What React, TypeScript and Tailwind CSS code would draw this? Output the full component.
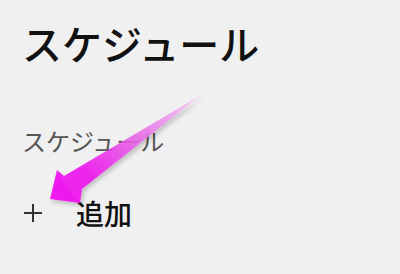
const Arrow = () => (
  <svg
    className="absolute left-0 top-0 pointer-events-none"
    width="400"
    height="274"
    viewBox="0 0 400 274"
  >
    <defs>
      <linearGradient id="arrowFill" x1="200" y1="95" x2="50" y2="200" gradientUnits="userSpaceOnUse">
        <stop offset="0" stopColor="#f6d0f6" />
        <stop offset="0.4" stopColor="#e86ae8" />
        <stop offset="0.75" stopColor="#ee10ee" />
        <stop offset="1" stopColor="#f200f2" />
      </linearGradient>
      <filter id="arrowShadow" x="-20%" y="-20%" width="140%" height="140%">
        <feDropShadow dx="2" dy="3" stdDeviation="2" floodColor="#000" floodOpacity="0.22" />
      </filter>
    </defs>
    <polygon
      points="201,95 82,189 80,203 50,199 57,170 64,176"
      fill="url(#arrowFill)"
      fillOpacity="0.88"
      filter="url(#arrowShadow)"
    />
  </svg>
);

const App = () => {
  return (
    <div
      className="relative w-[400px] h-[274px] overflow-hidden bg-[#f0f0f0]"
      style={{ fontFamily: '"Noto Sans CJK JP", "Noto Sans", sans-serif' }}
    >
      <div className="flex flex-col pl-[22px]">
        <h1 className="mt-[19px] text-[40px] leading-[48px] font-medium text-[#111]">
          スケジュール
        </h1>
        <p className="mt-[58px] text-[24px] leading-[32px] text-[#555]">
          スケジュール
        </p>
        <div className="mt-[38px] flex items-center">
          <svg width="20" height="20" viewBox="0 0 20 20" className="ml-[1px]">
            <path d="M10 1v18M1 10h18" stroke="#333" strokeWidth="2" />
          </svg>
          <span className="ml-[33px] text-[28px] leading-[36px] font-medium text-[#111]">
            追加
          </span>
        </div>
      </div>
      <Arrow />
    </div>
  );
};

export default App;
